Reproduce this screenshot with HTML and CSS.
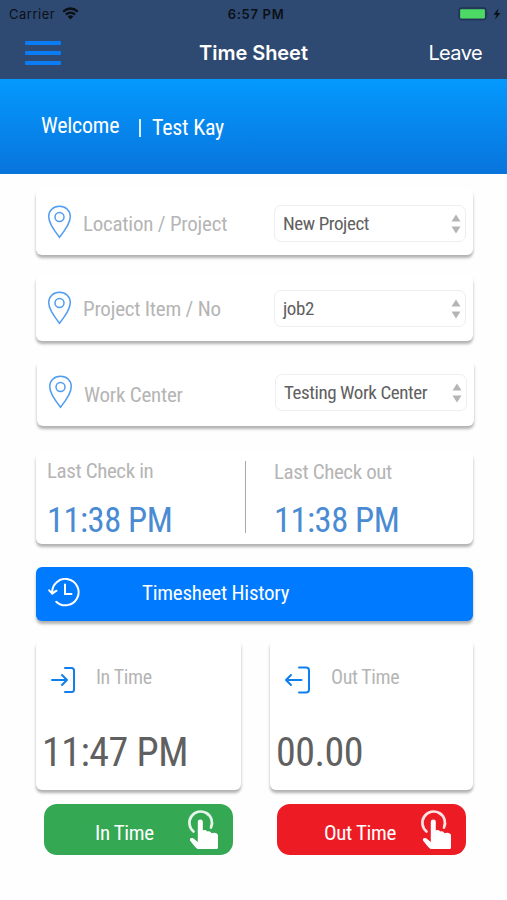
FILE: index.html
```
<!DOCTYPE html>
<html lang="en">
<head>
<meta charset="utf-8">
<title>Time Sheet</title>
<link rel="stylesheet" href="styles.css">
</head>
<body>
<svg class="defs" width="0" height="0">
  <symbol id="pin" viewBox="0 0 24 34"><path d="M12 1.200C5.600 1.200 1.200 5.800 1.200 11.600C1.200 18 6.500 25.500 12 32.200C17.500 25.500 22.800 18 22.800 11.600C22.800 5.800 18.400 1.200 12 1.200Z"/><circle cx="12" cy="12" r="4.500"/></symbol>
  <symbol id="sort" viewBox="0 0 10 20"><path d="M5 0.500L9.500 7.500H0.500ZM5 19.500L9.500 12.500H0.500Z"/></symbol>
  <symbol id="tap" viewBox="0 0 32 42"><path d="M6.500 22.500A11.300 11.300 0 1 1 24 18.500" fill="none" stroke="#fff" stroke-opacity=".88" stroke-width="2.700" stroke-linecap="round"/><path d="M10.800 13C10.800 9.800 15.800 9.800 15.800 13V21.500C17.500 20.600 19.500 21 20 22.500C22 21.800 24 22.500 24.500 24.300C27 23 31 23.800 31 26.500V38.500Q31 40 29.500 40H10.500C7.500 37.500 4.500 33.500 3 31.500C2.500 29 4.500 28.500 6.500 29.500L10.800 33Z" fill="#fff"/></symbol>
</svg>
<header class="top">
  <div class="status">
    <div class="carrier"><span>Carrier</span>
      <svg class="wifi" viewBox="0 0 17 13"><path d="M1.200 4.600Q8.500-1.700 15.800 4.600M3.900 7.500Q8.500 3.700 13.100 7.500" fill="none" stroke="#0b1017" stroke-width="2.300"/><path d="M5.700 9.400Q8.500 7.200 11.300 9.400L8.500 12.400Z" fill="#0b1017"/></svg>
    </div>
    <span class="clock">6:57 PM</span>
    <svg class="battery" viewBox="0 0 45 14"><rect x="1" y="1" width="27" height="11.500" rx="2.500" fill="none" stroke="#20324f" stroke-width="1.300"/><rect x="2.200" y="2.200" width="24.700" height="9.300" rx="1" fill="#4cd964"/><path d="M29.500 5.300Q31.300 6.800 29.500 8.400Z" fill="#20324f"/><path d="M40.500 1.500L35.500 7.800H38.500L37 12.500L42.500 6H39.400Z" fill="#0b1017"/></svg>
  </div>
  <nav class="nav">
    <div class="menu"><i></i><i></i><i></i></div>
    <h1>Time Sheet</h1>
    <span class="leave">Leave</span>
  </nav>
</header>
<section class="welcome"><span class="hi">Welcome</span><i></i><span class="name">Test Kay</span></section>
<main>
  <div class="card field"><svg class="pin"><use href="#pin"/></svg><span class="label">Location / Project</span><div class="select"><span>New Project</span><svg><use href="#sort"/></svg></div></div>
  <div class="card field second"><svg class="pin"><use href="#pin"/></svg><span class="label">Project Item / No</span><div class="select"><span>job2</span><svg><use href="#sort"/></svg></div></div>
  <div class="card field shifted"><svg class="pin"><use href="#pin"/></svg><span class="label">Work Center</span><div class="select"><span>Testing Work Center</span><svg><use href="#sort"/></svg></div></div>
  <div class="card last">
    <div class="check"><span class="label">Last Check in</span><span class="value">11:38 PM</span></div>
    <div class="check out"><span class="label">Last Check out</span><span class="value">11:38 PM</span></div>
  </div>
  <div class="history">
    <svg viewBox="0 0 34 30"><path d="M4.200 15A13.200 13.200 0 1 1 8.300 23.700M1.200 12.300L4.200 15.600L8.500 12.700M17 6.500V16H23.500" fill="none" stroke="#fff" stroke-width="2" stroke-linecap="round"/></svg>
    <span>Timesheet History</span>
  </div>
  <div class="times">
    <div class="card time">
      <div class="head"><svg viewBox="0 0 26 28"><path d="M15 2H21.500Q24 2 24 4.500V23.500Q24 26 21.500 26H15M2 14H17M12 9L17 14L12 19"/></svg><span class="label">In Time</span></div>
      <div class="big">11:47 PM</div>
    </div>
    <div class="card time right">
      <div class="head"><svg viewBox="0 0 26 28"><path d="M15 1.500H22Q25 1.500 25 4.500V23.500Q25 26.500 22 26.500H15M17.500 14H2M7 9L2 14L7 19"/></svg><span class="label">Out Time</span></div>
      <div class="big">00.00</div>
    </div>
  </div>
  <div class="actions">
    <div class="btn in"><span>In Time</span><svg><use href="#tap"/></svg></div>
    <div class="btn off"><span>Out Time</span><svg><use href="#tap"/></svg></div>
  </div>
</main>
</body>
</html>
```
FILE: styles.css
```
* { box-sizing: border-box; }
body { margin: 0; height: 900px; overflow: hidden; background: #fefefe; font-family: "Roboto Condensed", Roboto, sans-serif; font-stretch: 75%; font-size: 21px; line-height: 24px; letter-spacing: -.23px; }
span, .big, h1 { white-space: nowrap; }
svg { display: block; flex: none; }
.defs { position: absolute; }
.top { height: 79px; background: #2f4a72; font-family: Inter, sans-serif; font-stretch: normal; }
.status { height: 27px; display: grid; grid-template-columns: 1fr auto 1fr; align-items: center; padding: 1px 4px 0 9px; font-size: 13px; color: #0b1017; }
.carrier { display: flex; align-items: center; gap: 7px; letter-spacing: .5px; }
.wifi { width: 17px; height: 13px; margin-top: -1px; }
.clock { margin-right: -6px; font-weight: 600; letter-spacing: .7px; transform: translateX(-3px); }
.battery { width: 45px; height: 14px; justify-self: end; margin-top: -1px; }
.nav { height: 52px; display: grid; grid-template-columns: 1fr auto 1fr; align-items: center; padding: 0 25px; color: #fff; }
.menu { width: 36px; display: grid; gap: 6px; }
.menu i { height: 4px; border-radius: 1px; background: #0a7cf5; }
.nav h1 { margin: 0; font-size: 20px; font-weight: 600; letter-spacing: -.05px; }
.leave { justify-self: end; font-size: 20px; letter-spacing: -.6px; }
.welcome { height: 95px; display: flex; padding: 35px 0 0 41px; color: #fff; font-size: 22px; background: linear-gradient(#0499fe, #0874dc); }
.hi { width: 98px; }
.welcome i { width: 2px; height: 18px; margin-top: 5px; background: #d9efff; }
.name { margin: 2px 0 0 11px; }
main { padding: 15px 34px 0 36px; }
.card { background: #fff; border-radius: 6px; box-shadow: 0 3px 3px rgba(0,0,0,.3); }
.label { color: #b5b5b5; }
.field { display: flex; align-items: flex-start; height: 66px; margin-bottom: 20px; padding: 16px 7px 0 11px; }
.second { padding-top: 15px; }
.shifted { margin: -1px -1px 0 1px; padding-top: 14px; }
.pin { width: 25px; height: 34px; fill: none; stroke: #4f9cf0; stroke-width: 1.500; }
.second .pin, .shifted .pin { margin-top: 1px; }
.field .label { margin: 7px 0 0 11px; }
.shifted .label { margin-top: 9px; }
.select { width: 192px; height: 37px; margin-left: auto; padding: 0 4px 0 8px; border: 1px solid #eee; border-radius: 7px; display: flex; align-items: center; justify-content: space-between; color: #606060; font-size: 19px; letter-spacing: -.42px; }
.select span { margin-top: 1px; }
.select svg { width: 10px; height: 20px; fill: #b5b5b5; }
.last { height: 92px; margin-top: 26px; display: flex; }
.check { width: 210px; height: 72px; margin-top: 9px; padding-left: 11px; border-right: 1px solid #aaa; display: flex; flex-direction: column; }
.check.out { border: 0; padding: 1px 0 0 28px; }
.value { color: #4a8bd3; font-size: 34.500px; line-height: 40px; letter-spacing: -.5px; margin-top: 19px; }
.out .value { margin-top: 18px; }
.check .label { line-height: 20px; letter-spacing: -.4px; }
.history { height: 54px; margin-top: 23px; padding-left: 12px; display: flex; align-items: center; background: #007aff; border-radius: 6px; box-shadow: 0 3px 3px rgba(0,0,0,.3); color: #fff; }
.history svg { width: 34px; height: 30px; margin-top: -2px; }
.history span { margin: -2px 0 0 60px; }
.times { display: grid; grid-template-columns: 205px 203px; justify-content: space-between; margin-top: 19px; }
.time { height: 150px; padding: 25px 0 0 6px; }
.head { display: flex; padding-left: 8px; }
.head svg { width: 26px; height: 28px; margin-top: 1px; fill: none; stroke: #0f7ff0; stroke-width: 2; stroke-linecap: round; stroke-linejoin: round; }
.head .label { margin-left: 20px; font-size: 20px; letter-spacing: -.38px; }
.right .label { margin-left: 21px; }
.big { color: #606060; font-size: 40px; line-height: 46px; letter-spacing: -.5px; margin-top: 36px; }
.actions { display: flex; gap: 44px; padding-left: 8px; margin-top: 14px; }
.btn { width: 189px; height: 51px; border-radius: 13px; display: flex; justify-content: space-between; align-items: flex-start; padding: 5px 14px 0 51px; color: #fff; }
.btn span { margin-top: 12px; letter-spacing: -.35px; }
.btn svg { width: 32px; height: 42px; }
.in { background: #34a853; }
.off { background: #ed1c24; padding-left: 47px; }
```
